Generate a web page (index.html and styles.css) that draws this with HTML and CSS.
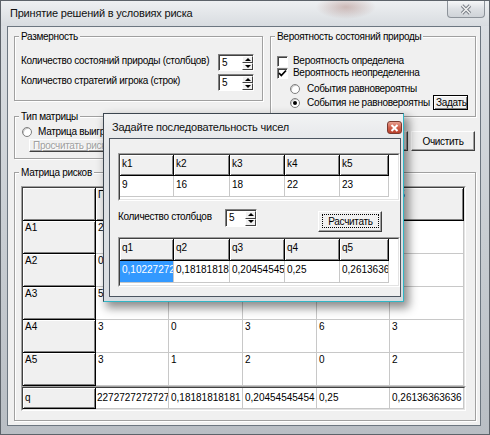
FILE: index.html
```html
<!DOCTYPE html>
<html lang="ru">
<head>
  <meta charset="UTF-8" />
  <title>Принятие решений в условиях риска</title>
  <link rel="stylesheet" href="styles.css">
</head>
<body>

<div class="window">
  <div class="titlebar">
    <span class="caption">Принятие решений в условиях риска</span>
    <div class="close-btn">
      <svg width="14" height="11" viewBox="0 0 14 11">
        <path d="M3 1.5 L11 9.5 M11 1.5 L3 9.5" stroke="#7b8088" stroke-width="3.4" fill="none"/>
        <path d="M3 1.5 L11 9.5 M11 1.5 L3 9.5" stroke="#f4f4f4" stroke-width="1.4" fill="none"/>
      </svg>
    </div>
  </div>

  <div class="client">
    <div class="columns">
      <div class="col-left">
        <div class="group dims">
          <div class="group-title">Размерность</div>
          <div class="field-row first">
            <span>Количество состояний природы (столбцов)</span>
            <div class="spin"><span class="spin-value">5</span><div class="spin-btns"><span class="spin-btn up"></span><span class="spin-btn down"></span></div></div>
          </div>
          <div class="field-row">
            <span>Количество стратегий игрока (строк)</span>
            <div class="spin"><span class="spin-value">5</span><div class="spin-btns"><span class="spin-btn up"></span><span class="spin-btn down"></span></div></div>
          </div>
        </div>

        <div class="group type">
          <div class="group-title">Тип матрицы</div>
          <div class="radio-row"><span class="radio"></span>Матрица выигрышей</div>
          <div class="btn disabled">Просчитать риски</div>
        </div>
      </div>

      <div class="col-right">
        <div class="group prob">
          <div class="group-title">Вероятность состояний природы</div>
          <div class="check-row first"><span class="check"></span>Вероятность определена</div>
          <div class="check-row">
            <span class="check">
              <svg width="9" height="9" viewBox="0 0 9 9"><path d="M1 4 L3.3 6.5 L8 1.5" stroke="#000" stroke-width="1.8" fill="none"/></svg>
            </span>Вероятность неопределенна
          </div>
          <div class="option-row gap"><span class="radio"></span>События равновероятны</div>
          <div class="option-row last"><span class="radio checked"></span><span class="option-text">События не равновероятны</span><div class="btn small default">Задать</div></div>
        </div>
        <div class="btn-row">
          <div class="btn wide">Рассчитать</div>
          <div class="btn">Очистить</div>
        </div>
      </div>
    </div>

    <div class="group risk">
      <div class="group-title">Матрица рисков</div>
      <div class="grid-frame risk-frame">
        <div class="grid risk-grid">
          <div class="cell fixed"></div><div class="cell fixed">П1</div><div class="cell fixed">П2</div><div class="cell fixed">П3</div><div class="cell fixed">П4</div><div class="cell fixed">П5</div>
          <div class="cell fixed">A1</div><div class="cell">2</div><div class="cell">4</div><div class="cell">5</div><div class="cell">3</div><div class="cell">1</div>
          <div class="cell fixed">A2</div><div class="cell">0</div><div class="cell">2</div><div class="cell">1</div><div class="cell">5</div><div class="cell">4</div>
          <div class="cell fixed">A3</div><div class="cell">5</div><div class="cell">3</div><div class="cell">0</div><div class="cell">2</div><div class="cell">6</div>
          <div class="cell fixed">A4</div><div class="cell">3</div><div class="cell">0</div><div class="cell">3</div><div class="cell">6</div><div class="cell">3</div>
          <div class="cell fixed">A5</div><div class="cell">3</div><div class="cell">1</div><div class="cell">2</div><div class="cell">0</div><div class="cell">2</div>
        </div>
      </div>
      <div class="grid-frame q-frame">
        <div class="grid q-grid">
          <div class="cell fixed">q</div><div class="cell tight">2272727272727</div><div class="cell">0,18181818181</div><div class="cell">0,20454545454</div><div class="cell">0,25</div><div class="cell">0,26136363636</div>
        </div>
      </div>
    </div>
  </div>

  <!-- modal dialog over the main form -->
  <div class="dialog">
    <div class="dlg-titlebar">
      <span class="dlg-caption">Задайте последовательность чисел</span>
      <div class="dlg-close">
        <svg width="9" height="8" viewBox="0 0 9 8"><path d="M1.5 1 L7.5 7 M7.5 1 L1.5 7" stroke="#fff" stroke-width="2" fill="none"/></svg>
      </div>
    </div>
    <div class="dlg-client">
      <div class="grid-frame k-frame">
        <div class="grid dlg-grid k-grid">
          <div class="cell fixed">k1</div><div class="cell fixed">k2</div><div class="cell fixed">k3</div><div class="cell fixed">k4</div><div class="cell fixed">k5</div>
          <div class="cell">9</div><div class="cell">16</div><div class="cell">18</div><div class="cell">22</div><div class="cell">23</div>
        </div>
      </div>
      <div class="dlg-row">
        <span class="dlg-label">Количество столбцов</span>
        <div class="spin dlg-spin"><span class="spin-value">5</span><div class="spin-btns"><span class="spin-btn up"></span><span class="spin-btn down"></span></div></div>
        <div class="btn calc"><span class="focus">Расчитать</span></div>
      </div>
      <div class="grid-frame qd-frame">
        <div class="grid dlg-grid qd-grid">
          <div class="cell fixed">q1</div><div class="cell fixed">q2</div><div class="cell fixed">q3</div><div class="cell fixed">q4</div><div class="cell fixed">q5</div>
          <div class="cell selected">0,10227272</div><div class="cell">0,181818181</div><div class="cell">0,204545454</div><div class="cell">0,25</div><div class="cell">0,26136363</div>
        </div>
      </div>
    </div>
  </div>
</div>

</body>
</html>
```

FILE: styles.css
```css
* {
  box-sizing: border-box;
  margin: 0;
  padding: 0;
}

body {
  width: 490px;
  height: 435px;
  overflow: hidden;
  background: #8a949e;
  font-family: "Liberation Sans", Arial, sans-serif;
  font-size: 10px;
  letter-spacing: -0.3px;
  color: #000;
  white-space: nowrap;
}

/* Main window frame */
.window {
  position: relative;
  width: 490px;
  height: 435px;
  padding: 0 8px 8px 6px;
  border: 1px solid #5d636a;
  background: linear-gradient(to bottom, #e6e9ec 0, #dadee2 30px, #c8cdd2 55%, #b9bec4 100%);
}

.titlebar {
  display: flex;
  align-items: flex-start;
  height: 25px;
  margin: 0 -8px 0 -6px;
  padding-left: 9px;
  background:
    radial-gradient(ellipse 30px 12px at 345px 6px, rgba(150, 90, 80, 0.35), transparent),
    linear-gradient(to bottom, #eef0f2, #d8dce0);
}

.caption {
  margin-top: 5px;
  font-size: 11px;
  line-height: 14px;
  letter-spacing: -0.2px;
  color: #111;
}

.close-btn {
  display: flex;
  align-items: center;
  justify-content: center;
  width: 38px;
  height: 17px;
  margin-left: auto;
  margin-right: 4px;
  border: 1px solid #8d939a;
  border-top: none;
  border-radius: 0 0 4px 4px;
  background: linear-gradient(to bottom, #f6f7f8, #dde0e4 50%, #cfd3d8);
}

.client {
  height: 400px;
  border: 1px solid #6c7680;
  background: #f0f0f0;
  padding: 9px 0 0 6px;
}

.columns {
  display: flex;
  gap: 7px;
}

.col-left {
  width: 249px;
}

.col-right {
  width: 206px;
}

/* Group boxes */
.group {
  border: 1px solid #a0a0a0;
  box-shadow: inset 1px 1px 0 #fff, 1px 1px 0 #fff;
}

.group-title {
  width: max-content;
  margin: -7px 0 0 4px;
  padding: 0 2px;
  line-height: 13px;
  background: #f0f0f0;
}

.dims {
  height: 65px;
}

.field-row {
  display: flex;
  justify-content: space-between;
  align-items: flex-start;
  height: 17px;
  margin-top: 3px;
  padding: 0 8px 0 6px;
  line-height: 13px;
}

.field-row.first {
  margin-top: 11px;
}

/* Spin edit */
.spin {
  display: flex;
  width: 36px;
  height: 17px;
  border: 1px solid;
  border-color: #808080 #fff #fff #808080;
  box-shadow: inset 1px 1px 0 #404040;
  background: #fff;
}

.spin-value {
  flex: 1;
  padding: 1px 0 0 3px;
  line-height: 13px;
}

.spin-btns {
  display: flex;
  flex-direction: column;
  width: 11px;
  margin: 1px 0 0 0;
}

.spin-btn {
  position: relative;
  flex: 1;
  background: #f0f0f0;
  border: 1px solid;
  border-color: #fff #404040 #404040 #fff;
}

.spin-btn::after {
  content: "";
  position: absolute;
  left: 50%;
  top: 50%;
  margin: -2px 0 0 -3px;
  border-left: 3px solid transparent;
  border-right: 3px solid transparent;
}

.spin-btn.up::after {
  border-bottom: 3px solid #000;
}

.spin-btn.down::after {
  border-top: 3px solid #000;
}

.type {
  margin-top: 15px;
  padding-bottom: 6px;
}

.radio-row {
  display: flex;
  align-items: center;
  gap: 6px;
  height: 12px;
  margin: 3px 0 0 7px;
  line-height: 12px;
}

.radio {
  position: relative;
  flex: none;
  width: 10px;
  height: 10px;
  border: 1px solid #7f7f7f;
  border-radius: 50%;
  background: #fff;
  box-shadow: inset 1px 1px 0 #c8c8c8;
}

.radio.checked::after {
  content: "";
  position: absolute;
  left: 2px;
  top: 2px;
  width: 4px;
  height: 4px;
  border-radius: 50%;
  background: #000;
}

/* Buttons */
.btn {
  display: flex;
  align-items: center;
  justify-content: center;
  height: 20px;
  border: 1px solid;
  border-color: #fff #404040 #404040 #fff;
  box-shadow: inset -1px -1px 0 #a0a0a0;
  background: #f0f0f0;
  overflow: hidden;
}

.btn.disabled {
  justify-content: flex-start;
  width: 150px;
  height: 13px;
  margin: 1px 0 0 14px;
  padding-left: 3px;
  line-height: 11px;
  color: #a0a0a0;
  text-shadow: 1px 1px 0 #fff;
}

.btn-row {
  display: flex;
  justify-content: flex-end;
  gap: 3px;
  margin: 14px 1px 0 0;
}

.btn-row .btn {
  width: 64px;
}

.btn-row .btn.wide {
  width: 68px;
}

.prob {
  padding-bottom: 6px;
}

.check-row {
  display: flex;
  align-items: center;
  gap: 5px;
  height: 12px;
  padding-left: 6px;
  line-height: 12px;
}

.check-row.first {
  margin-top: 12px;
}

.check {
  display: flex;
  align-items: center;
  justify-content: center;
  width: 11px;
  height: 11px;
  border: 1px solid;
  border-color: #808080 #fff #fff #808080;
  box-shadow: inset 1px 1px 0 #404040;
  background: #fff;
}

.option-row {
  display: flex;
  align-items: center;
  gap: 7px;
  height: 12px;
  padding-left: 19px;
  line-height: 12px;
}

.option-row.gap {
  margin-top: 4px;
}

.option-row.last {
  height: 15px;
  gap: 0;
}

.option-text {
  width: 126px;
  margin-left: 7px;
  overflow: hidden;
}

.btn.small {
  justify-content: flex-start;
  width: 35px;
  height: 15px;
  margin: 0 7px 0 auto;
  padding-left: 2px;
}

.btn.default {
  border: 1px solid #000;
  box-shadow: inset 1px 1px 0 #fff, inset -1px -1px 0 #808080;
}

/* Risk matrix */
.risk {
  width: 462px;
  margin-top: 13px;
  padding-bottom: 9px;
}

.grid-frame {
  border: 1px solid;
  border-color: #a0a0a0 #fff #fff #a0a0a0;
}

.grid {
  display: grid;
  border: 1px solid;
  border-color: #404040 #e3e3e3 #e3e3e3 #404040;
  background: #fff;
  overflow: hidden;
  letter-spacing: 0;
}

.risk-frame {
  width: 445px;
  margin: 7px 0 0 6px;
  border-bottom: none;
}

.risk-frame .grid {
  border-bottom: none;
}

.risk-grid,
.q-grid {
  grid-template-columns: 73px 73px 74px 74px 73px 74px;
}

.risk-grid {
  grid-auto-rows: 33px;
}

.q-frame {
  width: 445px;
  margin-left: 6px;
}

.q-grid {
  grid-auto-rows: 21px;
}

.cell {
  padding: 1px 2px 0;
  line-height: 12px;
  border-right: 1px solid #c8c8c8;
  border-bottom: 1px solid #c8c8c8;
  overflow: hidden;
  background: #fff;
}

.cell.fixed {
  background: #f0f0f0;
  border-right-color: #000;
  border-bottom-color: #000;
  box-shadow: inset 1px 1px 0 #fff, inset -1px -1px 0 #808080;
}

.cell.tight {
  padding-left: 1px;
}

.q-grid .cell {
  padding-top: 4px;
}

/* Dialog */
.dialog {
  position: absolute;
  left: 102px;
  top: 112px;
  width: 301px;
  height: 189px;
  padding: 24px 2px 4px 5px;
  border: 1px solid #3c4650;
  border-right-color: #2fb6c6;
  border-bottom-color: #2fb6c6;
  background: linear-gradient(to bottom, #f2f3f4, #dfe2e5 40px, #d8dce0);
  box-shadow: 4px 5px 9px 1px rgba(0, 0, 0, 0.45);
}

.dlg-titlebar {
  display: flex;
  align-items: flex-start;
  height: 24px;
  margin: -24px -2px 0 -5px;
  padding-left: 8px;
}

.dlg-caption {
  margin-top: 7px;
  font-size: 11px;
  line-height: 13px;
  letter-spacing: -0.2px;
  color: #111;
}

.dlg-close {
  display: flex;
  align-items: center;
  justify-content: center;
  width: 15px;
  height: 13px;
  margin: 7px 1px 0 auto;
  border: 1px solid #7a3a30;
  border-radius: 3px;
  background: linear-gradient(to bottom, #e8a090, #d0604c 50%, #b8402c);
}

.dlg-client {
  height: 159px;
  border: 1px solid #4c5560;
  background: #f0f0f0;
}

.k-frame {
  width: 282px;
  margin: 14px 0 0 8px;
}

.dlg-grid {
  grid-template-columns: 54px 56px 55px 55px 49px;
}

.k-grid {
  grid-auto-rows: 21px;
  height: 46px;
}

.dlg-grid .cell {
  padding: 3px 2px 0;
}

.dlg-row {
  display: flex;
  align-items: flex-start;
  height: 23px;
  margin: 8px 0 0 8px;
}

.dlg-label {
  width: 107px;
  margin-top: 1px;
  line-height: 13px;
}

.dlg-spin {
  width: 32px;
  height: 18px;
}

.btn.calc {
  align-items: stretch;
  width: 64px;
  height: 21px;
  margin: 2px 0 0 61px;
  padding: 2px 2px 3px 3px;
}

.focus {
  display: flex;
  flex: 1;
  align-items: center;
  justify-content: center;
  border: 1px dotted #000;
}

.qd-frame {
  width: 282px;
  margin: 5px 0 0 8px;
}

.qd-grid {
  grid-auto-rows: 22px;
  height: 48px;
}

.cell.selected {
  background: #3399ff;
  color: #fff;
}
```
